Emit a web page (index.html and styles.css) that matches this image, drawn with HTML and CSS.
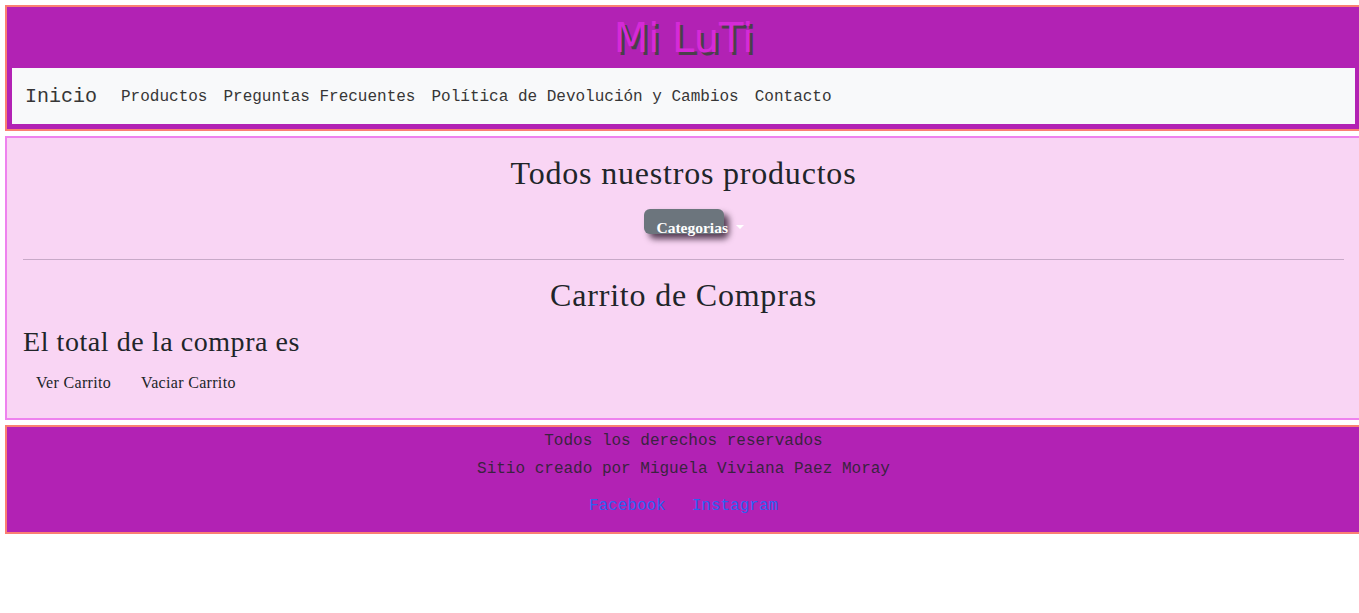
FILE: index.html
```html
<!DOCTYPE html>
<html lang="es">
<head>
<meta charset="utf-8">
<title>Mi LuTi - Productos</title>
<link rel="stylesheet" href="styles.css">
</head>
<body>
<header class="site-header">
  <h1 class="brand-title">Mi LuTi</h1>
  <nav class="navbar">
    <a class="navbar-brand" href="#">Inicio</a>
    <a class="nav-link" href="#">Productos</a>
    <a class="nav-link" href="#">Preguntas Frecuentes</a>
    <a class="nav-link" href="#">Política de Devolución y Cambios</a>
    <a class="nav-link" href="#">Contacto</a>
  </nav>
</header>

<main class="content">
  <h2 class="section-title">Todos nuestros productos</h2>
  <div class="dropdown-wrap">
    <button class="dropdown-btn" type="button">Categorias<span class="caret"></span></button>
  </div>
  <hr class="divider">
  <h2 class="section-title cart-title">Carrito de Compras</h2>
  <h3 class="total">El total de la compra es</h3>
  <div class="cart-actions">
    <button class="btn" type="button">Ver Carrito</button>
    <button class="btn" type="button">Vaciar Carrito</button>
  </div>
</main>

<footer class="site-footer">
  <p class="rights">Todos los derechos reservados</p>
  <p class="author">Sitio creado por Miguela Viviana Paez Moray</p>
  <div class="social">
    <a href="#">Facebook</a>
    <a href="#">Instagram</a>
  </div>
</footer>
</body>
</html>
```

FILE: styles.css
```css
html {
  overflow-x: hidden;
}

body {
  margin: 0;
  background: #ffffff;
  font-family: "Liberation Serif", serif;
  color: #212529;
}

*, *::before, *::after {
  box-sizing: border-box;
}

.site-header,
.content,
.site-footer {
  margin: 5px 0 0 5px;
  width: calc(100% - 2px);
}

/* Header */
.site-header {
  background: #b222b4;
  border: 2px solid #fa8072;
  padding: 7px 5px 5px;
}

.brand-title {
  margin: 0 0 6px;
  font-family: "DejaVu Sans", Verdana, sans-serif;
  font-weight: normal;
  font-size: 40px;
  line-height: 48px;
  text-align: center;
  color: #d52ad8;
  text-shadow: 3px 3px 0 #4a404a;
}

.navbar {
  display: flex;
  align-items: center;
  height: 56px;
  padding: 8px 13px;
  background: #f8f9fa;
  font-family: "Liberation Mono", "Courier New", monospace;
}

.navbar a {
  text-decoration: none;
  color: #363636;
}

.navbar-brand {
  font-size: 20px;
  line-height: 30px;
  padding: 6px 0 4px;
  margin-right: 16px;
}

.nav-link {
  font-size: 16px;
  line-height: 24px;
  padding: 9px 8px 7px;
}

/* Main */
.content {
  background: #f9d5f4;
  border: 2px solid #ee82ee;
  padding: 16px;
}

.section-title {
  margin: 0 0 17px;
  font-size: 32px;
  font-weight: normal;
  line-height: 1.2;
  letter-spacing: 0.025em;
  text-align: center;
}

.dropdown-wrap {
  display: flex;
  justify-content: center;
  margin-bottom: 25px;
}

.dropdown-btn {
  display: block;
  width: 80px;
  height: 25px;
  padding: 11px 0 0 13px;
  border: 0;
  border-radius: 6px;
  background: #6c757d;
  box-shadow: 5px 5px 6px rgba(20, 0, 20, 0.7);
  color: #ffffff;
  font-family: "Liberation Serif", serif;
  font-weight: bold;
  font-size: 15.5px;
  line-height: 16px;
  text-align: left;
  white-space: nowrap;
  overflow: visible;
}

.caret {
  display: inline-block;
  margin-left: 8px;
  vertical-align: 4px;
  border-top: 4px solid #ffffff;
  border-left: 4px solid transparent;
  border-right: 4px solid transparent;
}

.divider {
  margin: 0 0 16px;
  height: 0;
  border: 0;
  border-top: 1px solid #c8a9c8;
}

.cart-title {
  margin-bottom: 10px;
}

.total {
  margin: 0 0 6px;
  font-size: 28px;
  font-weight: normal;
  line-height: 1.2;
  letter-spacing: 0.02em;
}

.cart-actions {
  display: flex;
  gap: 4px;
}

.btn {
  padding: 6px 12px;
  border: 1px solid transparent;
  background: transparent;
  color: #212529;
  font-family: "Liberation Serif", serif;
  font-size: 16px;
  line-height: 24px;
  letter-spacing: 0.02em;
}

/* Footer */
.site-footer {
  background: #b222b4;
  border: 2px solid #fa8072;
  padding: 1.5px 0 14px;
  font-family: "Liberation Mono", "Courier New", monospace;
  font-size: 16px;
  line-height: 24px;
  text-align: center;
  color: #3a2340;
}

.rights {
  margin: 0 0 4px;
}

.author {
  margin: 0 0 13px;
}

.social {
  display: flex;
  justify-content: center;
  gap: 26px;
}

.social a {
  color: #2b62f2;
  text-decoration: none;
}
```
